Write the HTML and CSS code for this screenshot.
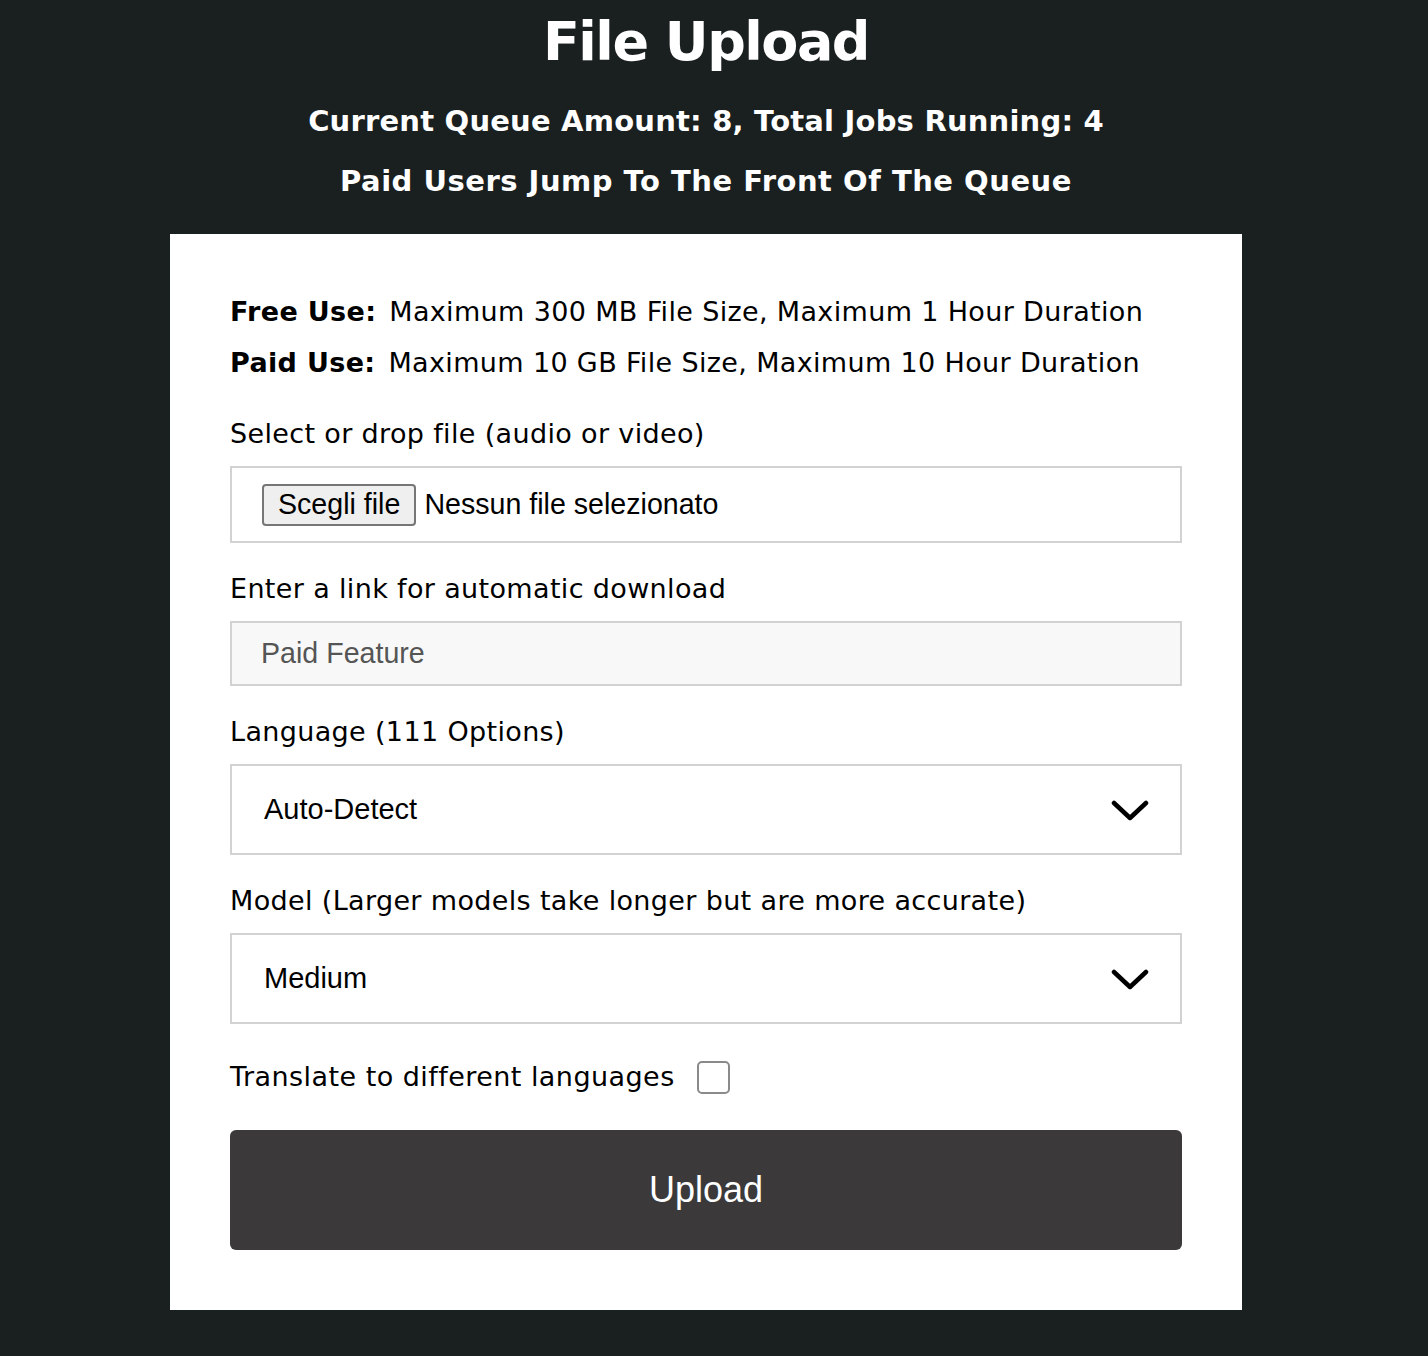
FILE: index.html
```html
<!DOCTYPE html>
<html lang="en">
<head>
<meta charset="utf-8">
<title>File Upload</title>
<link rel="stylesheet" href="styles.css">
</head>
<body>
<div class="page">
<header class="hero">
  <h1 class="title">File Upload</h1>
  <p class="sub">Current Queue Amount: 8, Total Jobs Running: 4</p>
  <p class="sub">Paid Users Jump To The Front Of The Queue</p>
</header>
<main class="card">
  <div class="limits">
    <p class="limit"><b>Free Use:</b> Maximum 300 MB File Size, Maximum 1 Hour Duration</p>
    <p class="limit"><b>Paid Use:</b> Maximum 10 GB File Size, Maximum 10 Hour Duration</p>
  </div>

  <div class="field">
    <label class="label">Select or drop file (audio or video)</label>
    <div class="filebox">
      <span class="filebtn">Scegli file</span>
      <span class="filename">Nessun file selezionato</span>
    </div>
  </div>

  <div class="field">
    <label class="label">Enter a link for automatic download</label>
    <div class="textbox">Paid Feature</div>
  </div>

  <div class="field">
    <label class="label">Language (111 Options)</label>
    <div class="select">
      <span>Auto-Detect</span>
      <svg class="chev" width="38" height="24" viewBox="0 0 38 24"><path d="M3 4 L19 19 L35 4" fill="none" stroke="#000" stroke-width="4.5" stroke-linecap="round" stroke-linejoin="round"/></svg>
    </div>
  </div>

  <div class="field">
    <label class="label">Model (Larger models take longer but are more accurate)</label>
    <div class="select">
      <span>Medium</span>
      <svg class="chev" width="38" height="24" viewBox="0 0 38 24"><path d="M3 4 L19 19 L35 4" fill="none" stroke="#000" stroke-width="4.5" stroke-linecap="round" stroke-linejoin="round"/></svg>
    </div>
  </div>

  <div class="check-row">
    <span class="label-inline">Translate to different languages</span>
    <span class="checkbox"></span>
  </div>

  <button class="upload">Upload</button>
</main>
</div>
</body>
</html>
```
FILE: styles.css
```css
* { box-sizing: border-box; }
html, body { margin: 0; padding: 0; }
body {
  background: #1a1f1f;
  font-family: "DejaVu Sans", "Noto Sans", sans-serif;
  color: #000;
  min-height: 1356px;
}
.page { width: 1412px; }
.hero {
  text-align: center;
  color: #fff;
  padding-top: 8px;
}
.title {
  margin: 0;
  font-size: 54px;
  line-height: 68px;
  font-weight: bold;
  letter-spacing: -1.5px;
}
.sub {
  margin: 0;
  font-size: 29px;
  line-height: 60px;
  font-weight: bold;
}
.sub:first-of-type { margin-top: 15px; letter-spacing: 0.2px; }
.sub + .sub { letter-spacing: 0.5px; }
.card {
  width: 1072px;
  margin: 23px auto 0;
  background: #fff;
  padding: 60px 60px 60px;
}
.limits { display: flex; flex-direction: column; gap: 15px; }
.limit {
  margin: 0;
  font-size: 27px;
  line-height: 36px;
  letter-spacing: 0.35px;
}
.limit b { margin-right: 4px; }
.field { margin-top: 35px; }
.field + .field { margin-top: 28px; }
.label {
  display: block;
  font-size: 27px;
  line-height: 36px;
  letter-spacing: 0.35px;
  margin-bottom: 14px;
}
.filebox {
  height: 77px;
  border: 2px solid #d2d2d2;
  display: flex;
  align-items: center;
  padding-left: 30px;
  font-family: "Liberation Sans", Arial, sans-serif;
  font-size: 28.6px;
}
.filebtn {
  height: 42px;
  padding: 0 14px;
  border: 2px solid #767676;
  border-radius: 4px;
  background: #efefef;
  display: flex;
  align-items: center;
  margin-right: 8px;
}
.textbox {
  height: 65px;
  border: 2px solid #d2d2d2;
  background: #f8f8f8;
  color: #555;
  font-family: "Liberation Sans", Arial, sans-serif;
  font-size: 28.6px;
  display: flex;
  align-items: center;
  padding-left: 29px;
}
.select {
  height: 91px;
  border: 2px solid #d2d2d2;
  display: flex;
  align-items: center;
  justify-content: space-between;
  padding: 0 31px 0 32px;
  font-family: "Liberation Sans", Arial, sans-serif;
  font-size: 29px;
}
.chev { display: block; margin-top: 2px; }
.check-row {
  display: flex;
  align-items: center;
  margin-top: 28px;
  height: 50px;
}
.label-inline { font-size: 27px; line-height: 36px; letter-spacing: 0.45px; }
.checkbox {
  width: 33px;
  height: 33px;
  border: 2px solid #8a8a8a;
  border-radius: 5px;
  margin-left: 22px;
  background: #fff;
}
.upload {
  display: block;
  width: 100%;
  height: 120px;
  margin-top: 28px;
  border: 0;
  border-radius: 6px;
  background: #3b393a;
  color: #fff;
  font-family: "Liberation Sans", Arial, sans-serif;
  font-size: 36px;
}
```
